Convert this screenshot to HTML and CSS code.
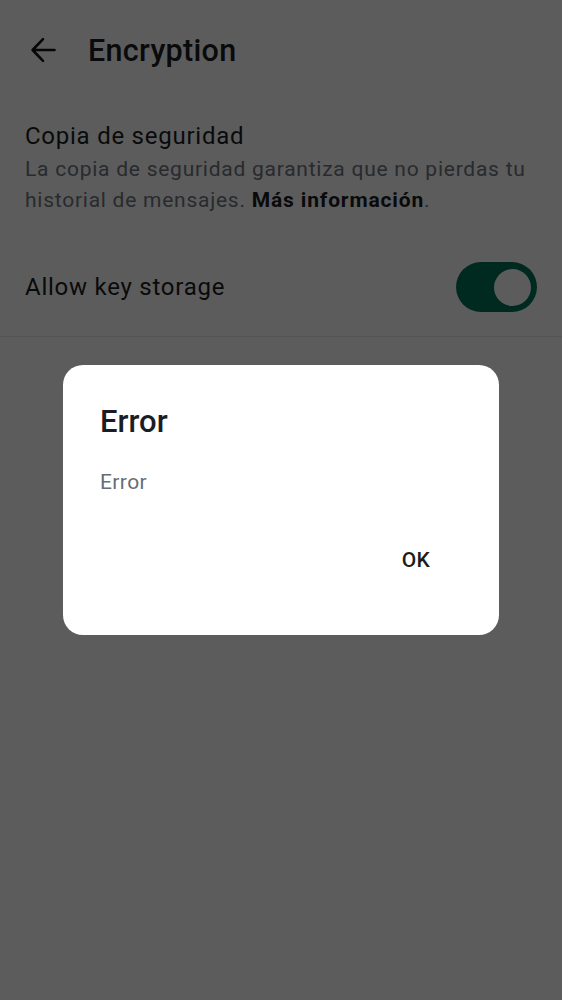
FILE: index.html
```html
<!DOCTYPE html>
<html lang="es">
<head>
<meta charset="utf-8">
<link rel="stylesheet" href="styles.css">
</head>
<body>
<div class="page">
  <header class="topbar">
    <svg class="back" width="26" height="26" viewBox="0 0 26 26"><path d="M24.5 13H2.8M13 2.2L2.6 13 13 23.8" fill="none" stroke="#111" stroke-width="2.6" stroke-linecap="round" stroke-linejoin="round"/></svg>
    <h1 class="title">Encryption</h1>
  </header>
  <section class="item">
    <div class="item-title">Copia de seguridad</div>
    <div class="item-desc">La copia de seguridad garantiza que no pierdas tu historial de mensajes. <b>Más información</b>.</div>
  </section>
  <section class="row">
    <div class="row-title">Allow key storage</div>
    <div class="toggle"><div class="knob"></div></div>
  </section>
  <div class="divider"></div>
</div>
<div class="scrim">
  <div class="dialog">
    <div class="dlg-title">Error</div>
    <div class="dlg-body">Error</div>
    <div class="dlg-actions"><span class="dlg-btn">OK</span></div>
  </div>
</div>
</body>
</html>
```

FILE: styles.css
```css
* { box-sizing: border-box; }
html, body { margin: 0; padding: 0; }
body {
  width: 562px;
  height: 1000px;
  background: #fff;
  font-family: Roboto, "Noto Sans", "Liberation Sans", sans-serif;
  color: #1b1d22;
  overflow: hidden;
}
.page { display: flex; flex-direction: column; }
.topbar {
  height: 100px;
  display: flex;
  align-items: center;
  padding: 0 0 0 30px;
  gap: 32px;
}
.title {
  margin: 0;
  font-size: 30.5px;
  font-weight: 500;
  letter-spacing: 0.3px;
  color: #1b1d22;
}
.item { padding: 20px 25px 0; }
.item-title { font-size: 24px; line-height: 32px; letter-spacing: 0.75px; color: #1b1d22; }
.item-desc {
  margin-top: 2px;
  font-size: 21px;
  line-height: 31px;
  letter-spacing: 0.75px;
  color: #6f7680;
}
.item-desc b { color: #1b1d22; font-weight: 700; letter-spacing: 0.85px; }
.row {
  display: flex;
  align-items: center;
  justify-content: space-between;
  padding: 0 25px;
  height: 98px;
  margin-top: 22px;
}
.row-title { font-size: 24px; letter-spacing: 0.75px; color: #1b1d22; }
.toggle {
  width: 81px;
  height: 50px;
  border-radius: 25px;
  background: #007556;
  display: flex;
  align-items: center;
  justify-content: flex-end;
  padding-right: 6px;
}
.knob { width: 37px; height: 37px; border-radius: 50%; background: #fff; }
.divider { height: 1px; background: #e6e8eb; }
.scrim {
  position: fixed;
  inset: 0;
  background: rgba(0, 0, 0, 0.64);
  display: flex;
  justify-content: center;
  align-items: flex-start;
  padding-top: 365px;
}
.dialog {
  width: 436px;
  height: 270px;
  background: #fff;
  border-radius: 20px;
  padding: 39px 37px 0;
  display: flex;
  flex-direction: column;
}
.dlg-title { font-size: 31px; line-height: 36px; font-weight: 500; color: #1b1d22; }
.dlg-body { font-size: 21px; line-height: 28px; letter-spacing: 0.4px; color: #656d77; margin-top: 28px; }
.dlg-actions { display: flex; justify-content: flex-end; margin-top: 52px; padding-right: 32px; }
.dlg-btn { font-size: 21px; font-weight: 500; letter-spacing: 0.2px; color: #1b1d22; }
```
